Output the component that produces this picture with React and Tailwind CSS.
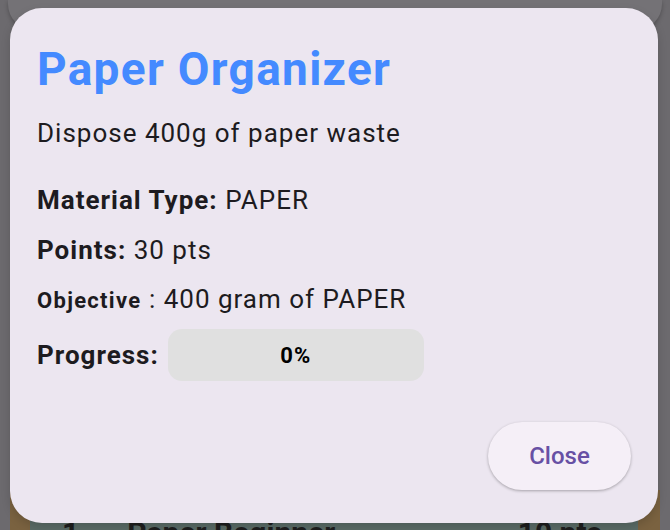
export default function App() {
  return (
    <div className="relative w-[670px] h-[530px] overflow-hidden bg-[#6c6a6e] font-['Roboto',sans-serif] flex flex-col">
      {/* page behind the scrim */}
      <div className="mx-[8px] h-[30px] rounded-b-[26px] bg-[#747276] shadow-[0_2px_4px_rgba(0,0,0,0.25)]" />
      <div className="mt-auto mx-[10px] h-[40px] bg-[#7a6240] px-[20px]">
        <div className="h-full bg-[#5a6b66] mr-[2px] flex items-end text-[30px] font-bold text-[#1e1e1e] leading-none translate-y-[18px]">
          <span className="ml-[32px]">1</span>
          <span className="ml-[48px] flex-1">Paper Beginner</span>
          <span className="mr-[36px]">10 pts</span>
        </div>
      </div>

      {/* dialog */}
      <div className="absolute left-[10px] top-[8px] w-[648px] h-[515px] rounded-[32px] bg-[#ece6f0] shadow-[0_4px_10px_rgba(0,0,0,0.15)] flex flex-col px-[27px] pt-[33px] pb-[33px] text-[#1d1b20]">
        <h1 className="text-[46px] font-bold text-[#448aff] leading-[56px] tracking-[1.3px]">Paper Organizer</h1>
        <p className="mt-[20px] text-[26px] leading-[32px] tracking-[1px]">Dispose 400g of paper waste</p>
        <div className="mt-[35px] text-[26px] leading-[32px] tracking-[1px]">
          <span className="font-bold">Material Type:</span> PAPER
        </div>
        <div className="mt-[18px] text-[26px] leading-[32px] tracking-[1px]">
          <span className="font-bold">Points:</span> 30 pts
        </div>
        <div className="mt-[17px] text-[26px] leading-[32px] tracking-[1px]">
          <span className="font-bold text-[22px] tracking-[1.3px]">Objective</span> : 400 gram of PAPER
        </div>
        <div className="mt-[12px] flex items-center gap-[9px]">
          <span className="font-bold text-[26px] leading-[32px] tracking-[1px]">Progress:</span>
          <div className="w-[256px] h-[52px] rounded-[14px] bg-[#e0e0e0] flex items-center justify-center text-[22px] font-bold tracking-[1px] text-black">
            0%
          </div>
        </div>
        <div className="mt-auto flex justify-end">
          <button className="w-[143px] h-[68px] rounded-full bg-[#f5eff7] shadow-[0_1px_3px_rgba(0,0,0,0.3)] text-[24px] font-medium text-[#6750a4]">
            Close
          </button>
        </div>
      </div>
    </div>
  );
}
